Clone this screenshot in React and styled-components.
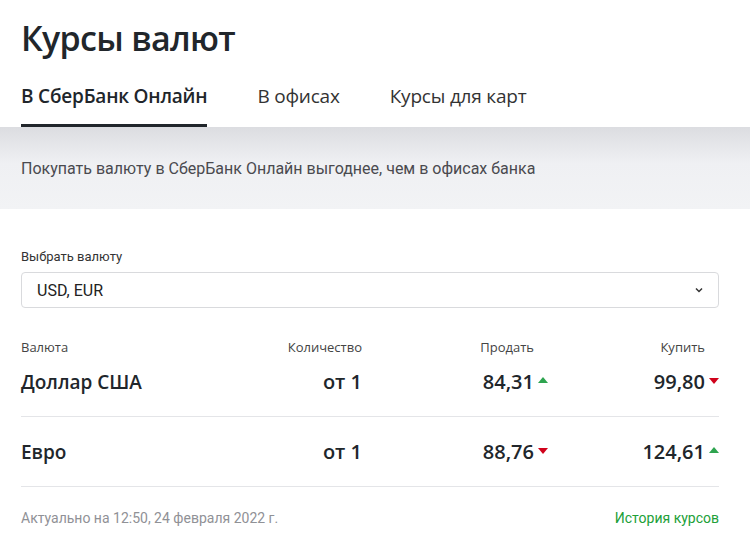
import React from "react";
import styled, { createGlobalStyle } from "styled-components";

const Global = createGlobalStyle`
  body {
    margin: 0;
    background: #fff;
    font-family: "Open Sans", "Liberation Sans", sans-serif;
    color: #21262b;
  }
`;

const Page = styled.div`
  width: 750px;
`;

const Title = styled.h1`
  margin: 0;
  padding: 14px 21px 0;
  font-size: 34px;
  line-height: 48px;
  font-weight: 600;
  letter-spacing: -0.7px;
`;

const Tabs = styled.div`
  display: flex;
  gap: 50px;
  padding: 20px 21px 0;
`;

const Tab = styled.div`
  font-size: 19px;
  line-height: 28px;
  padding-bottom: 14px;
  letter-spacing: -0.2px;
  font-weight: ${(p) => (p.active ? 600 : 400)};
  color: ${(p) => (p.active ? "#21262b" : "#333")};
  border-bottom: 3px solid ${(p) => (p.active ? "#21262b" : "transparent")};
`;

const Banner = styled.div`
  height: 82px;
  display: flex;
  align-items: center;
  padding: 0 21px;
  background: linear-gradient(#dcdde1 0%, #eff0f3 45%, #f2f3f5 100%);
  font-family: Roboto, "Liberation Sans", sans-serif;
  font-size: 16px;
  color: #4a4a4f;
`;

const Body = styled.div`
  padding: 39px 31px 0 21px;
`;

const Label = styled.div`
  font-family: Roboto, "Liberation Sans", sans-serif;
  font-size: 13px;
  line-height: 18px;
  color: #333;
`;

const Select = styled.div`
  margin-top: 6px;
  height: 36px;
  box-sizing: border-box;
  border: 1px solid #d9dadd;
  border-radius: 4px;
  display: flex;
  align-items: center;
  justify-content: space-between;
  padding: 0 14px 0 15px;
  font-family: Roboto, "Liberation Sans", sans-serif;
  font-size: 16px;
  color: #222;
`;

const Table = styled.div`
  margin-top: 30px;
`;

const Row = styled.div`
  display: grid;
  grid-template-columns: 1fr 150px 186px 171px;
  align-items: center;
  padding: ${(p) => (p.head ? "0" : p.first ? "14px 0 22px" : "23px 0 22px")};
  border-bottom: ${(p) => (p.head ? "none" : "1px solid #e4e5e8")};
`;

const Head = styled.div`
  font-size: 13px;
  line-height: 18px;
  color: #444;
  text-align: ${(p) => (p.left ? "left" : "right")};
  padding-right: ${(p) => (p.arrow ? "14px" : "0")};
`;

const Name = styled.div`
  font-size: 19px;
  line-height: 24px;
  font-weight: 600;
  color: #21262b;
`;

const Value = styled.div`
  display: flex;
  justify-content: flex-end;
  align-items: center;
  font-size: 20px;
  line-height: 24px;
  font-weight: 600;
  color: #21262b;
`;

const Tri = styled.span`
  width: 14px;
  display: flex;
  justify-content: flex-end;
  &::after {
    content: "";
    width: 0;
    height: 0;
    border-left: 5px solid transparent;
    border-right: 5px solid transparent;
    ${(p) =>
      p.up
        ? "border-bottom: 6px solid #2ea44f; margin-top: -4px;"
        : "border-top: 6px solid #d0021b; margin-top: -2px;"}
  }
`;

const Footer = styled.div`
  display: flex;
  justify-content: space-between;
  margin-top: 22px;
  font-family: Roboto, "Liberation Sans", sans-serif;
  font-size: 14px;
  line-height: 18px;
  color: #909196;
`;

const Link = styled.span`
  color: #21a038;
`;

const rates = [
  { name: "Доллар США", sell: "84,31", sellUp: true, buy: "99,80", buyUp: false },
  { name: "Евро", sell: "88,76", sellUp: false, buy: "124,61", buyUp: true },
];

export default function App() {
  return (
    <Page>
      <Global />
      <Title>Курсы валют</Title>
      <Tabs>
        <Tab active>В СберБанк Онлайн</Tab>
        <Tab>В офисах</Tab>
        <Tab>Курсы для карт</Tab>
      </Tabs>
      <Banner>Покупать валюту в СберБанк Онлайн выгоднее, чем в офисах банка</Banner>
      <Body>
        <Label>Выбрать валюту</Label>
        <Select>
          USD, EUR
          <svg width="10" height="10" viewBox="0 0 10 10">
            <path d="M2 3.5 L5 6.5 L8 3.5" fill="none" stroke="#333" strokeWidth="1.5" />
          </svg>
        </Select>
        <Table>
          <Row head>
            <Head left>Валюта</Head>
            <Head>Количество</Head>
            <Head arrow>Продать</Head>
            <Head arrow>Купить</Head>
          </Row>
          {rates.map((r, i) => (
            <Row key={r.name} first={i === 0}>
              <Name>{r.name}</Name>
              <Value>от 1</Value>
              <Value>
                {r.sell}
                <Tri up={r.sellUp} />
              </Value>
              <Value>
                {r.buy}
                <Tri up={r.buyUp} />
              </Value>
            </Row>
          ))}
        </Table>
        <Footer>
          <span>Актуально на 12:50, 24 февраля 2022 г.</span>
          <Link>История курсов</Link>
        </Footer>
      </Body>
    </Page>
  );
}
